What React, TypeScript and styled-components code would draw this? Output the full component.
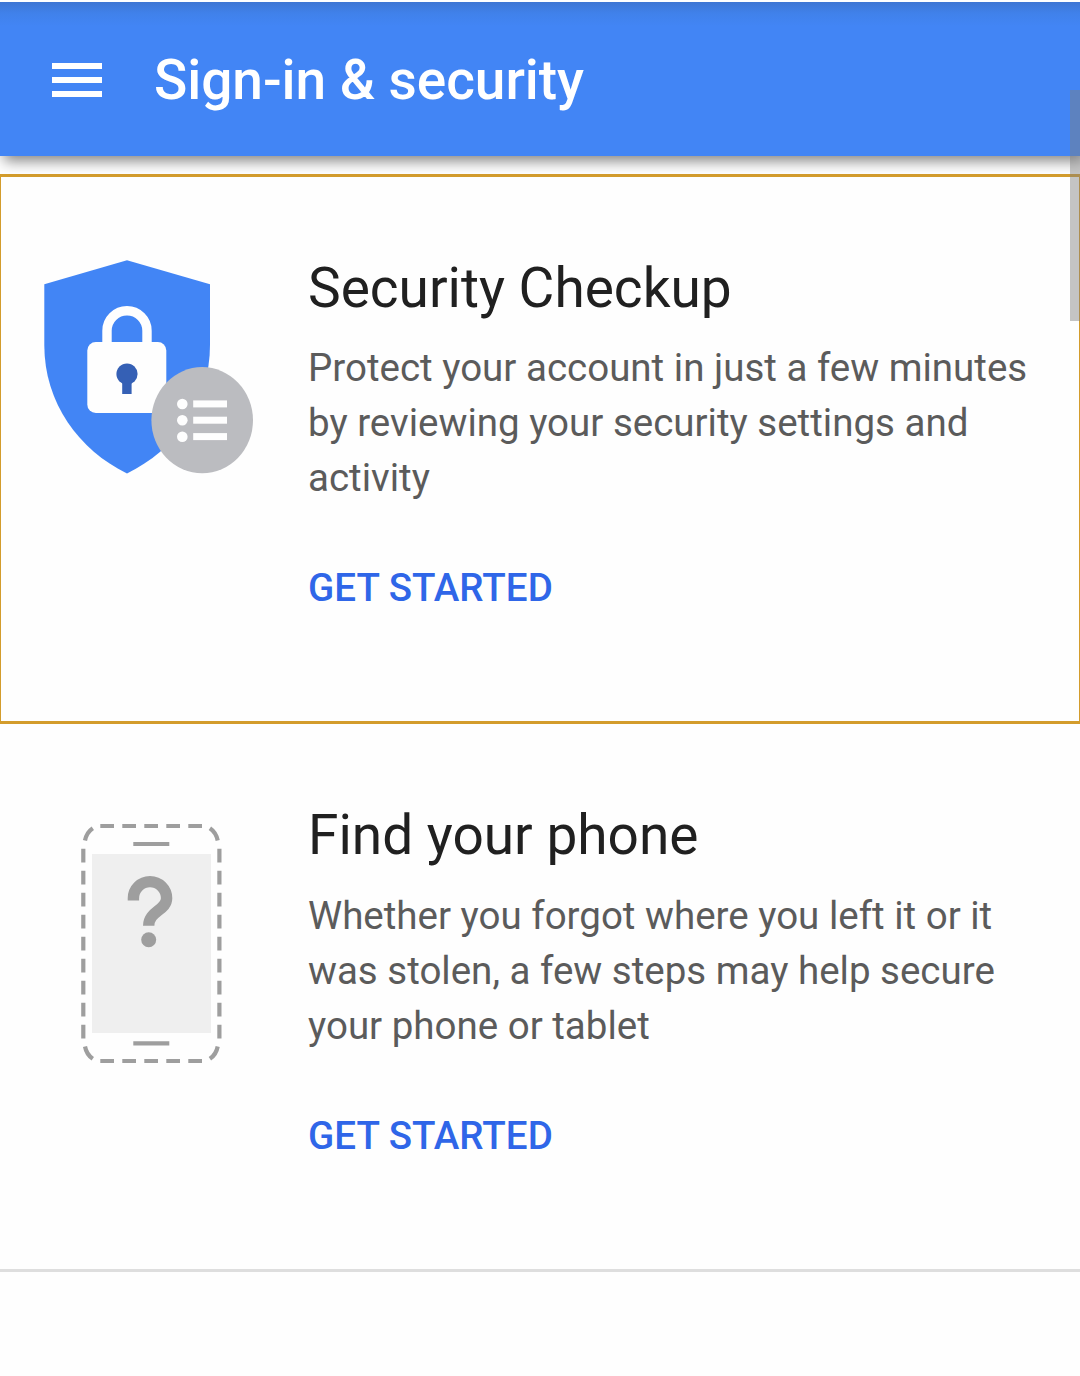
import React from 'react';
import styled, { createGlobalStyle } from 'styled-components';

const GlobalStyle = createGlobalStyle`
  *, *::before, *::after { box-sizing: border-box; }
  body {
    margin: 0;
    background: #fefefe;
    font-family: Roboto, "Liberation Sans", sans-serif;
  }
`;

const Page = styled.div`
  position: relative;
  display: flex;
  flex-direction: column;
  width: 1080px;
  height: 1376px;
  padding-top: 2px;
  overflow: hidden;
`;

const AppBar = styled.header`
  display: flex;
  align-items: center;
  flex: none;
  height: 154px;
  margin-bottom: 18px;
  padding: 2px 0 0 52px;
  color: #fff;
  background: linear-gradient(#3d75d3 0, #4081ea 11px, #4285f5 24px);
  box-shadow: 4px 5px 13px 0 rgba(0, 0, 0, 0.48);
  clip-path: inset(0 0 -40px 0);
`;

const MenuButton = styled.button`
  display: flex;
  flex-direction: column;
  gap: 7.7px;
  width: 50px;
  margin-right: 52px;
  padding: 0;
  border: 0;
  background: none;
`;

const MenuBar = styled.span`
  height: 6px;
  background: #fff;
`;

const AppTitle = styled.h1`
  margin: 0;
  font-size: 55px;
  font-weight: 500;
  line-height: 66px;
  letter-spacing: -0.05px;
  white-space: nowrap;
`;

const Card = styled.section<{ $focused?: boolean }>`
  display: grid;
  grid-template-columns: 307px 1fr;
  flex: none;
  height: ${(p) => (p.$focused ? 550 : 548)}px;
  padding: ${(p) => (p.$focused ? 0 : '0 1px')};
  border-style: solid;
  border-width: ${(p) => (p.$focused ? '3px 1px' : '0 0 3px')};
  border-color: ${(p) => (p.$focused ? '#d39c2c' : '#dedede')};
  background: #fefefe;
`;

const Artwork = styled.div<{ $left: number; $top: number }>`
  padding: ${(p) => `${p.$top}px 0 0 ${p.$left}px`};

  svg { display: block; }
`;

const Copy = styled.div<{ $top: number }>`
  display: flex;
  flex-direction: column;
  align-items: flex-start;
  padding-top: ${(p) => p.$top}px;
`;

const CardTitle = styled.h2<{ $gap: number }>`
  margin: 0 0 ${(p) => p.$gap}px;
  color: #202020;
  font-size: 55px;
  font-weight: 400;
  line-height: 66px;
  white-space: nowrap;
`;

const Description = styled.p`
  margin: 0 0 55px;
  color: #5b5b5b;
  font-size: 38.5px;
  line-height: 55px;
  white-space: nowrap;
`;

const Action = styled.a`
  color: #2f66e8;
  font-size: 38.5px;
  font-weight: 500;
  line-height: 55px;
  letter-spacing: 0.05px;
  text-decoration: none;
  white-space: nowrap;
`;

const ScrollThumb = styled.div`
  position: absolute;
  top: 90px;
  right: 0;
  z-index: 2;
  width: 10px;
  height: 231px;
  background: rgba(126, 126, 126, 0.45);
`;

function ShieldArt() {
  return (
    <svg width="210" height="214" viewBox="0 0 210 214" aria-hidden="true">
      <path d="M83 .3 166 24.2V85C166 143 131 190 83 213.5 35 190 .3 143 .3 85V24.2Z" fill="#4285f5" />
      <path d="M63 84V70.7a20 20 0 0 1 40 0V84" fill="none" stroke="#fefefe" strokeWidth="9.4" />
      <rect x="43.3" y="82" width="79" height="71" rx="8.5" fill="#fefefe" />
      <circle cx="83" cy="114" r="10.6" fill="#3560b5" />
      <rect x="78.2" y="119" width="9.4" height="15" fill="#3560b5" />
      <ellipse cx="158.2" cy="160.2" rx="50.8" ry="53.1" fill="#bbbcc0" />
      {[144, 160.3, 176.7].map((y) => (
        <g key={y} fill="#fefefe">
          <circle cx="138.3" cy={y} r="5.3" />
          <rect x="149.2" y={y - 3.6} width="33.8" height="7" />
        </g>
      ))}
    </svg>
  );
}

function PhoneArt() {
  const across = [0, 1, 2, 3, 4].map((i) => 19.3 + i * 22);
  const down = [0, 1, 2, 3, 4, 5, 6, 7, 8].map((i) => 25.7 + i * 22);
  return (
    <svg width="142" height="241" viewBox="0 0 142 241" aria-hidden="true">
      <rect x="11" y="31" width="119" height="179" fill="#efefef" />
      <g fill="none" stroke="#9e9e9e" strokeWidth="4.2">
        {across.map((x) => (
          <path key={x} d={`M${x} 3h13.7M${x} 238h13.7`} />
        ))}
        {down.map((y) => (
          <path key={y} d={`M2.3 ${y}v13.7M138.4 ${y}v13.7`} />
        ))}
        <path d="M4 17.5Q5.5 9.5 11.8 5.2M136.7 17.5Q135.2 9.5 128.9 5.2" />
        <path d="M4 223.5Q5.5 231.5 11.8 235.8M136.7 223.5Q135.2 231.5 128.9 235.8" />
        <path d="M52.3 21h36M52.3 220.3h36" />
      </g>
      <path
        d="M52.4 77.5v-2.3a16.6 16.6 0 0 1 33.2 0C85.6 87.5 67.7 88 67.7 102.8"
        fill="none"
        stroke="#9e9e9e"
        strokeWidth="11.4"
      />
      <circle cx="67.7" cy="116.8" r="7.5" fill="#9e9e9e" />
    </svg>
  );
}

export default function App() {
  return (
    <>
      <GlobalStyle />
      <Page>
        <AppBar>
          <MenuButton aria-label="Menu">
            <MenuBar />
            <MenuBar />
            <MenuBar />
          </MenuButton>
          <AppTitle>Sign-in &amp; security</AppTitle>
        </AppBar>
        <Card $focused>
          <Artwork $left={43} $top={83}>
            <ShieldArt />
          </Artwork>
          <Copy $top={78}>
            <CardTitle $gap={19}>Security Checkup</CardTitle>
            <Description>
              Protect your account in just a few minutes
              <br />
              by reviewing your security settings and
              <br />
              activity
            </Description>
            <Action>GET STARTED</Action>
          </Copy>
        </Card>
        <Card>
          <Artwork $left={80} $top={99}>
            <PhoneArt />
          </Artwork>
          <Copy $top={78}>
            <CardTitle $gap={20}>Find your phone</CardTitle>
            <Description>
              Whether you forgot where you left it or it
              <br />
              was stolen, a few steps may help secure
              <br />
              your phone or tablet
            </Description>
            <Action>GET STARTED</Action>
          </Copy>
        </Card>
        <ScrollThumb />
      </Page>
    </>
  );
}
